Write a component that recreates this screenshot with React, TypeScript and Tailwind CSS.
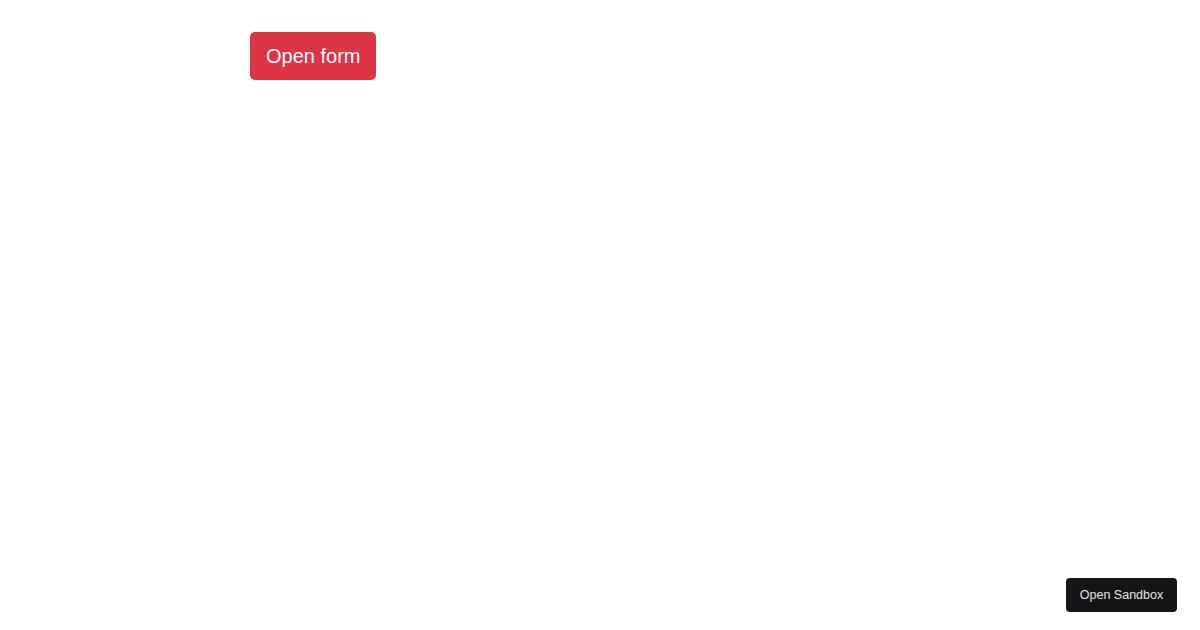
import React from "react";

export default function App() {
  return (
    <div className="relative w-[1200px] h-[630px] bg-white" style={{ fontFamily: '"Liberation Sans", Arial, sans-serif' }}>
      <div className="pt-[32px] pl-[250px]">
        <button className="h-[48px] px-[16px] rounded-[5px] bg-[#dc3545] text-white text-[20px] leading-[30px]">
          Open form
        </button>
      </div>
      <button className="absolute right-[23px] bottom-[18px] w-[111px] h-[34px] rounded-[4px] bg-[#151515] text-[#e6e6e6] text-[12.5px]">
        Open Sandbox
      </button>
    </div>
  );
}
